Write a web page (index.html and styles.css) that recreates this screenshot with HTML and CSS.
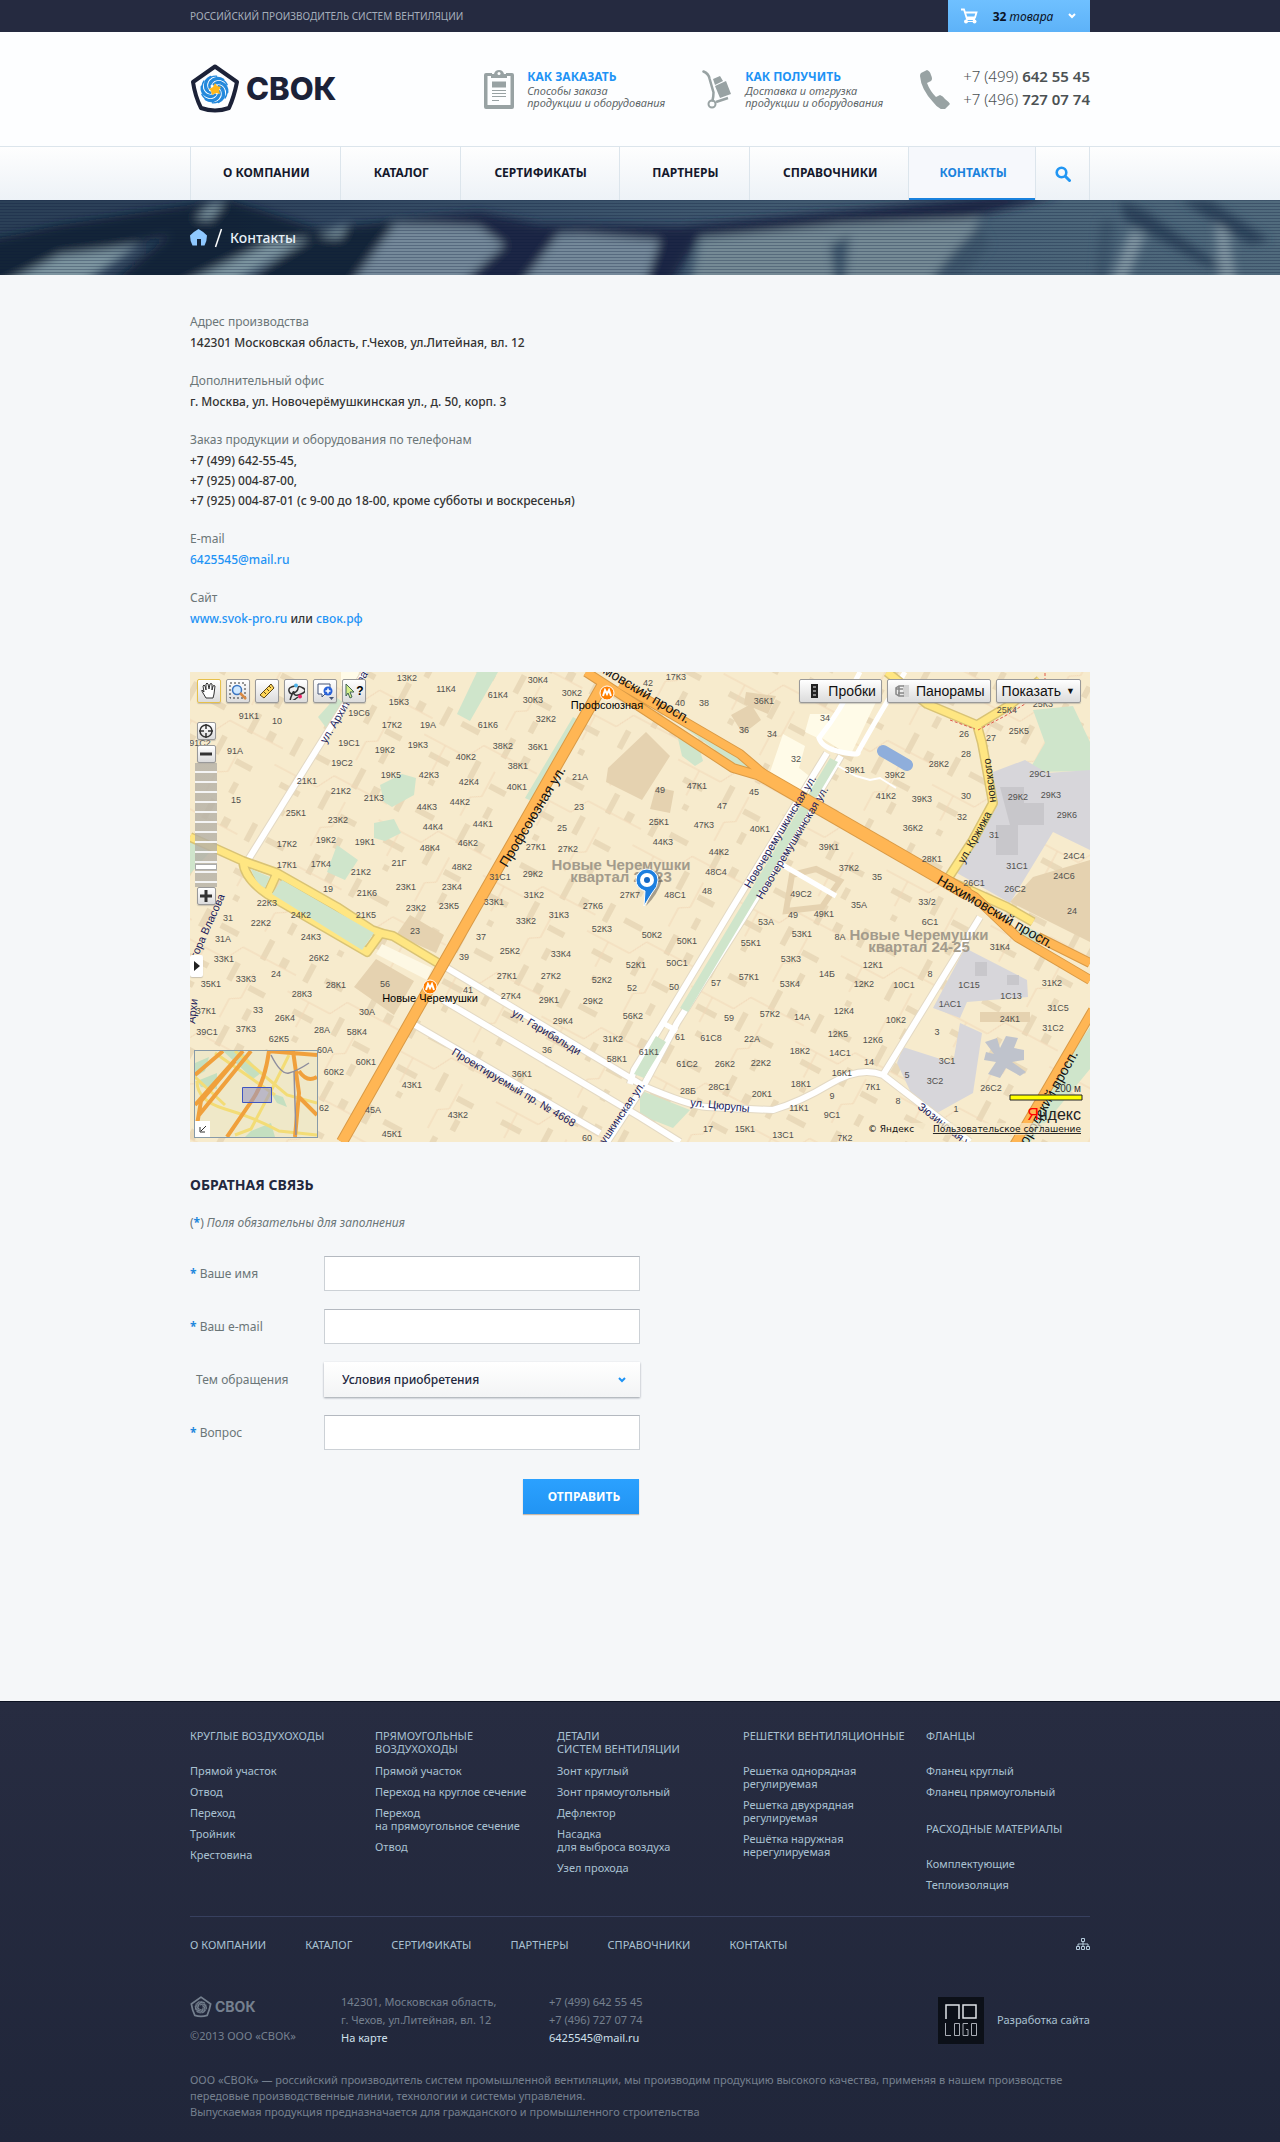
FILE: index.html
```html
<!DOCTYPE html>
<html lang="ru">
<head>
<meta charset="utf-8">
<meta name="viewport" content="width=device-width, initial-scale=1">
<title>СВОК — Контакты</title>
<link rel="stylesheet" href="styles.css">
</head>
<body>
<svg class="defs" aria-hidden="true">
  <defs>
    <symbol id="emblem" viewBox="0 0 50 50">
      <path d="M25 2.500 47 18 Q44 33 39 44 Q25 49 11 44 Q5 32 3 18Z" fill="none" stroke="currentColor" stroke-width="4" stroke-linejoin="round"/>
    </symbol>
    <symbol id="swirl" viewBox="-16 -16 32 32">
      <g fill="none" stroke="currentColor" stroke-linecap="round">
        <path id="arm" d="M-5-2C-7-9 2-15 9-10" stroke-width="2.500"/>
        <path id="arm2" d="M-4-5C-1-12 9-13 13-5" stroke-width="1.500"/>
        <use href="#arm" transform="rotate(60)"/><use href="#arm2" transform="rotate(60)"/>
        <use href="#arm" transform="rotate(120)"/><use href="#arm2" transform="rotate(120)"/>
        <use href="#arm" transform="rotate(180)"/><use href="#arm2" transform="rotate(180)"/>
        <use href="#arm" transform="rotate(240)"/><use href="#arm2" transform="rotate(240)"/>
        <use href="#arm" transform="rotate(300)"/><use href="#arm2" transform="rotate(300)"/>
      </g>
    </symbol>
  </defs>
</svg>

<div class="topbar">
  <div class="wrap topbar-row">
    <span class="slogan">РОССИЙСКИЙ ПРОИЗВОДИТЕЛЬ СИСТЕМ ВЕНТИЛЯЦИИ</span>
    <button class="cart" type="button">
      <svg width="17" height="16" viewBox="0 0 17 16" aria-hidden="true"><path d="M0 1.500h3l3 9.500h8M4 4.500h11.500L14 9.500H5.500" fill="none" stroke="#fff" stroke-width="1.800"/><path d="M4 13.500h11" stroke="#fff"/><circle cx="5" cy="13.500" r="2" fill="#fff"/><circle cx="13.500" cy="13.500" r="2" fill="#fff"/></svg>
      <span class="cart-text"><b>32</b> <i>товара</i></span>
      <svg width="8" height="6" viewBox="0 0 8 6" aria-hidden="true"><path d="M1 1l3 3 3-3" fill="none" stroke="#fff" stroke-width="2"/></svg>
    </button>
  </div>
</div>

<header class="header">
  <div class="wrap header-row">
    <a class="logo" href="#">
      <svg width="50" height="50" viewBox="0 0 50 50" aria-hidden="true"><use href="#emblem"/><use href="#swirl" class="swirl" x="9" y="10" width="31" height="31"/><path d="M25 19l2 3 4 1-2 3 1 4-4-1-4 2-1-4-2-2 4-2z" fill="#ffb81c"/></svg>
      <span class="logo-text">СВОК</span>
    </a>
    <div class="info">
      <svg width="30" height="39" viewBox="0 0 30 39" aria-hidden="true"><path d="M2 3h6v3H3.500v29h23V6H22V3h6q2 0 2 2v32q0 2-2 2H2q-2 0-2-2V5q0-2 2-2z" fill="#98a2a3"/><path d="M7 8V4h3q1-4 5-4t5 4h3v4z" fill="#98a2a3"/><circle cx="15" cy="3.500" r="1.500" fill="#fff"/><path d="M8 11.500h14v6H8z" fill="#98a2a3"/><path d="M8 20.500h14M8 23.500h14M8 26.500h14M8 30.500h7" stroke="#98a2a3"/></svg>
      <div class="info-text"><a href="#">КАК ЗАКАЗАТЬ</a><span>Способы заказа<br>продукции и оборудования</span></div>
    </div>
    <div class="info">
      <svg width="30" height="39" viewBox="0 0 30 39" aria-hidden="true"><path d="M1.500 1.500q5 2 6 7l4 14q0 4-1 8" fill="none" stroke="#98a2a3" stroke-width="2.500" stroke-linecap="round"/><path d="M11 9l7-3 3 5-8 4zM13 16l11-5 5 13-11 4z" fill="#98a2a3"/><path d="M14 32l12-4" stroke="#98a2a3" stroke-width="2.500"/><circle cx="10" cy="34" r="3.500" fill="none" stroke="#98a2a3" stroke-width="2"/></svg>
      <div class="info-text"><a href="#">КАК ПОЛУЧИТЬ</a><span>Доставка и отгрузка<br>продукции и оборудования</span></div>
    </div>
    <div class="info">
      <svg width="30" height="39" viewBox="0 0 30 39" aria-hidden="true"><path d="M1 3l6-3q3 1 4 5 2 4 0 6l-4 2q3 8 9 14l4-2q3 1 5 4 4 3 5 5l-6 6q-6-1-11-8Q1 19 0 6q0-2 1-3z" fill="#98a2a3"/></svg>
      <div class="phones"><span>+7 (499) <b>642 55 45</b></span><span>+7 (496) <b>727 07 74</b></span></div>
    </div>
  </div>
</header>

<nav class="nav" aria-label="Главное меню">
  <div class="wrap nav-row">
    <a href="#">О КОМПАНИИ</a>
    <a href="#">КАТАЛОГ</a>
    <a href="#">СЕРТИФИКАТЫ</a>
    <a href="#">ПАРТНЕРЫ</a>
    <a href="#">СПРАВОЧНИКИ</a>
    <a class="active" href="#" aria-current="page">КОНТАКТЫ</a>
    <button type="button" aria-label="Поиск"><svg width="16" height="16" viewBox="0 0 16 16" aria-hidden="true"><circle cx="6.500" cy="6.500" r="4.800" fill="none" stroke="#2196f3" stroke-width="2.600"/><path d="M10.500 10.500l4 4" stroke="#2196f3" stroke-width="3" stroke-linecap="round"/></svg></button>
  </div>
</nav>

<div class="banner">
  <svg class="banner-art" viewBox="0 0 1280 75" preserveAspectRatio="xMidYMid slice" aria-hidden="true">
    <defs>
      <filter id="soft" x="-5%" y="-30%" width="110%" height="160%"><feGaussianBlur stdDeviation="5"/></filter>
      <linearGradient id="sky" x2="1"><stop stop-color="#2b4057"/><stop offset=".15" stop-color="#2c4059"/><stop offset=".45" stop-color="#3a526a"/><stop offset=".8" stop-color="#4a6478"/><stop offset="1" stop-color="#516b7d"/></linearGradient>
      <pattern id="scan" width="4" height="3" patternUnits="userSpaceOnUse"><path d="M0 .5h4" stroke="#0a1a38" stroke-opacity=".28"/></pattern>
    </defs>
    <path fill="url(#sky)" d="M0 0h1280v75H0z"/>
    <g filter="url(#soft)">
      <path fill="#101d33" fill-opacity=".85" d="M-10 40L60 25 190 5 230 0 320 30 400 20 500 22 350 90H240L300 40 190 85H110L170 35 60 60-10 90z"/>
      <path fill="#7d95a0" d="M180 85L270 42 310 38 230 85zM0 85l60-30 80-10-60 40zM195 18L212 4 225 2 210 20zM318 36l30-12-8 14z"/>
      <path fill="#74899a" d="M350 85L395 24 480 26 505 45 460 85zM520 85L545 36 680 28 670 85z"/>
      <path fill="#1a2744" d="M395 20L480 12 540 24 680 26 850 10 1000-5 1060-4 960 20 700 36 670 85H645L660 40 560 32 520 85H460L505 45 480 27z"/>
      <path fill="#748a95" d="M700 38L840 24 980 18 960 60 930 85H690z"/>
      <path fill="#40596d" d="M835 85L830 45 850 35 845 85zM955 50L980 25 990 45 960 80 930 80zM1100 20h15L1105 85h-10z"/>
      <path fill="#8094a0" d="M1130 30l15 5-20 50h-15zM1215 15l12 10 10 60h-18z"/>
      <path fill="#2f455c" d="M1120 0l25 10 80 60-20-5-80-45zM1180 0h30l60 40-20 5z"/>
    </g>
    <path fill="url(#scan)" d="M0 0h1280v75H0z"/>
  </svg>
  <div class="wrap crumbs">
    <a href="#" aria-label="Главная"><svg width="17" height="17" viewBox="0 0 17 17" aria-hidden="true"><path d="M8.500 0Q14 3 17 6.500q0 5-2.500 10H11V10H7v6.500H2.500Q0 12 0 6.500 3 3 8.500 0z" fill="#8fc8ff"/></svg></a>
    <svg width="9" height="20" viewBox="0 0 9 20" aria-hidden="true"><path d="M1.500 19L7.500 1" stroke="#fff" stroke-width="1.500"/></svg>
    <h1>Контакты</h1>
  </div>
</div>

<main class="wrap main">
  <dl class="contacts">
    <div><dt>Адрес производства</dt><dd>142301 Московская область, г.Чехов, ул.Литейная, вл. 12</dd></div>
    <div><dt>Дополнительный офис</dt><dd>г. Москва, ул. Новочерёмушкинская ул., д. 50, корп. 3</dd></div>
    <div><dt>Заказ продукции и оборудования по телефонам</dt><dd>+7 (499) 642-55-45,</dd><dd>+7 (925) 004-87-00,</dd><dd>+7 (925) 004-87-01 (с 9-00 до 18-00, кроме субботы и воскресенья)</dd></div>
    <div><dt>E-mail</dt><dd><a href="#">6425545@mail.ru</a></dd></div>
    <div><dt>Сайт</dt><dd><a href="#">www.svok-pro.ru</a> или <a href="#">свок.рф</a></dd></div>
  </dl>

  <section class="map" aria-label="Карта проезда">
    <svg class="map-art" viewBox="0 0 900 470" preserveAspectRatio="xMidYMid slice">
      <defs>
        <pattern id="blocks" width="118" height="97" patternUnits="userSpaceOnUse" patternTransform="rotate(28)">
          <path d="M8 6h6v20H8zM28 12h20v6H28zM78 4h6v22h-6zM98 14h8v10h-8zM14 54h22v6H14zM58 40h6v20h-6zM82 54h18v6H82zM26 78h6v6h-6zM90 76h6v12h-6z" fill="#e9d9b9"/>
          <path d="M0 42h48l10-18h60M70 97V76l10-6V42M24 42v28" fill="none" stroke="#f1d8b8"/>
        </pattern>
      </defs>
      <path fill="#f7ebcd" d="M0 0h900v470H0z"/>
      <path fill="url(#blocks)" d="M0 0h900v470H0z"/>
      <g fill="#cfe5cb">
        <path d="M287 0h21l-28 49-13-7zM383 45l7 4-42 83-13-6zM147 173l21 15-13 20-18-8zM190 113l22-11 14 4-2 17-22 12-8-5zM184 151l20-4 7 14-16 8-11-3z"/>
        <path d="M843 38l40-4 17 36v29l-62 1 17-29zM487 62l22 13 4 14-8 5-13-10zM128 45l18-20 8 6-14 30zM450 418l50 20-17 18-33-13z"/>
        <path d="M480 45l70 37 16 18-22-8zM900 355v42l-60 73h-20zM0 170l20 10-20 22zM837 255l20 10-14 12-26-16z"/>
      </g>
      <path d="M803 100l32-12 22 13 43-3v80l-37-18-43 71-53-30 36-66zM775 276l62 32 1 17-61 5-7 16-27-10zM770 351l22 10-9 60-36 20-24-16-16-34 6-16 50 16z" fill="#d7d6da"/>
      <path d="M810 115h24v16h20v22h-26v30h-22v-30h14zM785 290h12v14h-12zM817 303h12v10h-12z" fill="#c8c7cb"/>
      <path d="M795 370l12-4 3 10 6-12 12 2-4 10 10 2v10l-12 2 14 10-6 4-14-8-6 10-12-4 8-12-12-2 2-8 8 2z" fill="#bfc3cc"/>
      <g fill="#e5d2b0">
        <path d="M843 205l57-17v82l-80-40zM418 96l38-36 24 24-28 44-36-18zM164 315l22-28 38 22-20 34zM220 243l34 20-8 18-40-18zM541 43l20-11 10 16-18 14zM556 20l30 4-8 18-24-10zM466 115l18 4-4 22-20-4z"/>
        <path d="M790 340h50v10H790z"/>
      </g>
      <path d="M186 282l6-10 50 24-5 12z" fill="#fdf8e4"/>
      <path d="M593 62l22 12-6 22 18 14-7 16-40-26zM620 42l20 0-8 26-17-8zM660 10l26 20-26 54-28-18zM151 0h18l-4 14h-14z" fill="#fffbe8"/>
      <path d="M602 203l24-6 24 12-18 26-36 4z" fill="none" stroke="#e5d2b0" stroke-width="6"/>
      <path d="M693 79l24 14" stroke="#8faedb" stroke-width="12" stroke-linecap="round"/>

      <g fill="none" stroke="#e3d9c4" stroke-width="8">
        <path d="M175 0L58 188M637 81L541 238 473 351 444 398 440 412M651 84L565 228 487 351 453 415 417 470M257 296L452 413M253 328L450 445 490 470M225 353L410 461M451 413Q500 434 517 435T583 438Q610 430 640 412T693 403L780 470M693 403L790 245"/>
      </g>
      <g fill="none" stroke="#fff" stroke-width="6">
        <path d="M175 0L58 188M637 81L541 238 473 351 444 398 440 412M651 84L565 228 487 351 453 415 417 470M257 296L452 413M253 328L450 445 490 470M225 353L410 461M451 413Q500 434 517 435T583 438Q610 430 640 412T693 403L780 470M693 403L790 245"/>
        <path d="M670 0Q650 40 629 66 632 76 651 80T668 80Q685 50 697 30L715 0M473 351l14 8M584 188l62 36" stroke-width="5"/>
        <path d="M648 94l18 10 14 4 10-2 16 10" stroke-width="2"/>
      </g>
      <path d="M640 86l8 4L498 340l-8-4zM466 364l10 6-22 36-10-4z" fill="#cfe5cb"/>
      <g fill="none" stroke="#d9c375" stroke-width="10" stroke-linejoin="round">
        <path d="M0 165L53 189 87 201 147 235 182 258Q192 262 203 264L248 291M53 189Q54 206 77 222L177 280 190 262M87 201L78 221M697 0L737 32 787 53 820 33 850 8M787 53L792 71 803 131 783 168 757 208 817 235 843 250"/>
      </g>
      <g fill="none" stroke="#ffe682" stroke-width="7" stroke-linejoin="round">
        <path d="M0 165L53 189 87 201 147 235 182 258Q192 262 203 264L248 291M53 189Q54 206 77 222L177 280 190 262M87 201L78 221M697 0L737 32 787 53 820 33 850 8M787 53L792 71 803 131 783 168 757 208 817 235 843 250"/>
      </g>
      <path d="M61 197l19 8-5 11q-10-5-14-19zM92 208l92 53-12 17-90-56z" fill="#cfe5cb"/>
      <g fill="none" stroke="#d99a46" stroke-width="12" stroke-linejoin="round">
        <path d="M412 14L240 315 152 470"/><path d="M396 0L450 35 543 96 577 106M430 12L550 82 577 105 785 225 827 265 900 308M848 265L900 291M903 338L823 475" stroke-width="10"/><path d="M570 102L778 222" stroke-width="14"/>
      </g>
      <g fill="none" stroke="#ffb654" stroke-width="10" stroke-linejoin="round">
        <path d="M412 14L240 315 152 470"/><path d="M396 0L450 35 543 96 577 106M430 12L550 82 577 105 785 225 827 265 900 308M848 265L900 291M903 338L823 475" stroke-width="8"/><path d="M570 102L778 222" stroke-width="12"/>
      </g>
      <path d="M760 48l25 9M788 58l27-14 20-12 20-20V0" fill="none" stroke="#e0584a" stroke-dasharray="3 2"/>

      <g class="district">
        <text x="431" y="198">Новые Черемушки</text><text x="431" y="210">квартал 22-23</text>
        <text x="729" y="268">Новые Черемушки</text><text x="729" y="280">квартал 24-25</text>
      </g>
      <g class="houses">
        <text x="59" y="47">91К1</text><text x="87" y="52">10</text><text x="10" y="74">91С2</text><text x="45" y="82">91А</text><text x="46" y="131">15</text><text x="117" y="112">21К1</text><text x="106" y="144">25К1</text><text x="97" y="175">17К2</text><text x="97" y="196">17К1</text><text x="77" y="234">22К3</text><text x="131" y="195">17К4</text><text x="138" y="220">19</text><text x="169" y="44">19С6</text><text x="159" y="74">19С1</text><text x="152" y="94">19С2</text><text x="151" y="122">21К2</text><text x="148" y="151">23К2</text><text x="136" y="171">19К2</text><text x="175" y="173">19К1</text><text x="171" y="203">21К2</text><text x="177" y="224">21К6</text><text x="184" y="129">21К3</text><text x="201" y="106">19К5</text><text x="195" y="81">19К2</text><text x="202" y="56">17К2</text><text x="209" y="33">15К3</text><text x="217" y="9">13К2</text><text x="256" y="20">11К4</text><text x="238" y="56">19А</text><text x="228" y="76">19К3</text><text x="239" y="106">42К3</text><text x="237" y="138">44К3</text><text x="243" y="158">44К4</text><text x="240" y="179">48К4</text><text x="209" y="194">21Г</text><text x="216" y="218">23К1</text><text x="262" y="218">23К4</text><text x="272" y="198">48К2</text><text x="278" y="174">46К2</text><text x="293" y="155">44К1</text><text x="270" y="133">44К2</text><text x="279" y="113">42К4</text><text x="276" y="88">40К2</text><text x="313" y="77">38К2</text><text x="298" y="56">61К6</text><text x="308" y="26">61К4</text><text x="348" y="11">30К4</text><text x="343" y="31">30К3</text><text x="382" y="24">30К2</text><text x="356" y="50">32К2</text><text x="348" y="78">36К1</text><text x="328" y="97">38К1</text><text x="327" y="118">40К1</text><text x="390" y="108">21А</text><text x="389" y="138">23</text><text x="372" y="159">25</text><text x="346" y="178">27К1</text><text x="378" y="180">27К2</text><text x="310" y="208">31С1</text><text x="343" y="205">29К2</text><text x="344" y="226">31К2</text><text x="304" y="233">33К1</text><text x="440" y="226">27К7</text><text x="226" y="239">23К2</text><text x="259" y="237">23К5</text><text x="403" y="237">27К6</text>
        <text x="486" y="8">17К3</text><text x="458" y="14">42</text><text x="490" y="34">40</text><text x="514" y="34">38</text><text x="574" y="32">36К1</text><text x="554" y="61">36</text><text x="582" y="65">34</text><text x="635" y="49">34</text><text x="606" y="90">32</text><text x="507" y="117">47К1</text><text x="470" y="121">49</text><text x="564" y="123">45</text><text x="532" y="137">47</text><text x="469" y="153">25К1</text><text x="514" y="156">47К3</text><text x="473" y="173">44К3</text><text x="529" y="183">44К2</text><text x="570" y="160">40К1</text><text x="526" y="203">48С4</text><text x="485" y="226">48С1</text><text x="517" y="222">48</text><text x="665" y="101">39К1</text><text x="705" y="106">39К2</text><text x="696" y="127">41К2</text><text x="732" y="130">39К3</text><text x="723" y="159">36К2</text><text x="639" y="178">39К1</text><text x="659" y="199">37К2</text><text x="687" y="208">35</text><text x="611" y="225">49С2</text><text x="669" y="236">35А</text><text x="737" y="233">33/2</text><text x="742" y="190">28К1</text><text x="772" y="148">32</text><text x="776" y="127">30</text><text x="749" y="95">28К2</text><text x="776" y="85">28</text><text x="774" y="65">26</text><text x="801" y="69">27</text><text x="817" y="41">25К4</text><text x="829" y="62">25К5</text><text x="853" y="35">25К3</text><text x="850" y="105">29С1</text><text x="828" y="128">29К2</text><text x="861" y="126">29К3</text><text x="877" y="146">29К6</text><text x="804" y="166">31</text><text x="827" y="197">31С1</text><text x="884" y="187">24С4</text><text x="874" y="207">24С6</text><text x="784" y="214">26С1</text><text x="825" y="220">26С2</text>
        <text x="38" y="249">31</text><text x="71" y="254">22К2</text><text x="111" y="246">24К2</text><text x="121" y="268">24К3</text><text x="33" y="270">31А</text><text x="34" y="290">33К1</text><text x="129" y="289">26К2</text><text x="176" y="246">21К5</text><text x="225" y="262">23</text><text x="291" y="268">37</text><text x="274" y="288">39</text><text x="86" y="305">24</text><text x="56" y="310">33К3</text><text x="21" y="315">35К1</text><text x="146" y="316">28К1</text><text x="112" y="325">28К3</text><text x="195" y="315">56</text><text x="278" y="321">41</text><text x="68" y="341">33</text><text x="16" y="342">37К1</text><text x="95" y="349">26К4</text><text x="177" y="343">30А</text><text x="56" y="360">37К3</text><text x="17" y="363">39С1</text><text x="132" y="361">28А</text><text x="89" y="370">62К5</text><text x="167" y="363">58К4</text><text x="135" y="381">60А</text><text x="176" y="393">60К1</text><text x="144" y="403">60К2</text><text x="134" y="439">62</text><text x="183" y="441">45А</text><text x="202" y="465">45К1</text><text x="222" y="416">43К1</text><text x="268" y="446">43К2</text><text x="336" y="252">33К2</text><text x="369" y="246">31К3</text><text x="412" y="260">52К3</text><text x="320" y="282">25К2</text><text x="371" y="285">33К4</text><text x="446" y="296">52К1</text><text x="317" y="307">27К1</text><text x="361" y="307">27К2</text><text x="412" y="311">52К2</text><text x="442" y="319">52</text><text x="321" y="327">27К4</text><text x="359" y="331">29К1</text><text x="403" y="332">29К2</text><text x="443" y="347">56К2</text><text x="373" y="352">29К4</text><text x="423" y="370">31К2</text><text x="357" y="381">36</text><text x="427" y="390">58К1</text><text x="332" y="405">36К1</text><text x="397" y="469">60</text>
        <text x="462" y="266">50К2</text><text x="497" y="272">50К1</text><text x="487" y="294">50С1</text><text x="484" y="318">50</text><text x="576" y="253">53А</text><text x="603" y="246">49</text><text x="634" y="245">49К1</text><text x="612" y="265">53К1</text><text x="561" y="274">55К1</text><text x="650" y="268">8А</text><text x="740" y="253">6С1</text><text x="601" y="290">53К3</text><text x="559" y="308">57К1</text><text x="526" y="314">57</text><text x="600" y="315">53К4</text><text x="637" y="305">14Б</text><text x="683" y="296">12К1</text><text x="674" y="315">12К2</text><text x="740" y="305">8</text><text x="714" y="316">10С1</text><text x="580" y="345">57К2</text><text x="539" y="349">59</text><text x="612" y="348">14А</text><text x="654" y="342">12К4</text><text x="706" y="351">10К2</text><text x="648" y="365">12К5</text><text x="683" y="371">12К6</text><text x="490" y="368">61</text><text x="521" y="369">61С8</text><text x="562" y="370">22А</text><text x="459" y="383">61К1</text><text x="610" y="382">18К2</text><text x="650" y="384">14С1</text><text x="497" y="395">61С2</text><text x="535" y="395">26К2</text><text x="571" y="394">22К2</text><text x="679" y="393">14</text><text x="652" y="404">16К1</text><text x="611" y="415">18К1</text><text x="498" y="422">28Б</text><text x="529" y="418">28С1</text><text x="572" y="425">20К1</text><text x="683" y="418">7К1</text><text x="642" y="427">9</text><text x="609" y="439">11К1</text><text x="642" y="446">9С1</text><text x="708" y="432">8</text><text x="518" y="460">17</text><text x="555" y="460">15К1</text><text x="593" y="466">13С1</text><text x="655" y="469">7К2</text><text x="717" y="406">5</text><text x="745" y="412">3С2</text><text x="757" y="392">3С1</text><text x="747" y="363">3</text><text x="766" y="440">1</text><text x="779" y="316">1С15</text><text x="760" y="335">1АС1</text><text x="821" y="327">1С13</text><text x="820" y="350">24К1</text><text x="810" y="278">31К4</text><text x="862" y="314">31К2</text><text x="868" y="339">31С5</text><text x="863" y="359">31С2</text><text x="882" y="242">24</text><text x="801" y="419">26С2</text>
      </g>
      <g class="streets">
        <text transform="translate(136 72) rotate(-59)">ул. Архитектора</text>
        <text transform="translate(560 217) rotate(-59)">Новочеремушкинская ул.</text>
        <text transform="translate(572 228) rotate(-59)">Новочеремушкинская ул.</text>
        <text transform="translate(321 343) rotate(31)">ул. Гарибальди</text>
        <text transform="translate(261 382) rotate(31)">Проектируемый пр. № 4668</text>
        <text transform="translate(500 434) rotate(6)">ул. Цюрупы</text>
        <text transform="translate(727 436) rotate(38)">Зюзинская ул.</text>
        <text transform="translate(-10 325) rotate(-66)">Архитектора Власова</text>
        <text transform="translate(5 352) rotate(-84)">Архи</text>
        <text transform="translate(383 520) rotate(-56)">Новочеремушкинская ул.</text>
      </g>
      <g class="avenues">
        <text transform="translate(317 196) rotate(-59)">Профсоюзная ул.</text>
        <text transform="translate(384 -16) rotate(31)">Нахимовский просп.</text>
        <text transform="translate(746 211) rotate(30)">Нахимовский просп.</text>
        <text transform="translate(835 478) rotate(-61)">городский просп.</text>
      </g>
      <g class="streets dark">
        <text transform="translate(774 192) rotate(-61)">ул. Кржижа</text>
        <text transform="translate(806 130) rotate(-97)">новского</text>
      </g>
      <g class="metro">
        <circle cx="417" cy="21" r="7"/><path d="M413 24l2-6 2 4 2-4 2 6"/><text x="417" y="37">Профсоюзная</text>
        <circle cx="240" cy="315" r="7"/><path d="M236 318l2-6 2 4 2-4 2 6"/><text x="240" y="330">Новые Черемушки</text>
      </g>
      <path d="M456 234q12-12 16-26l-4-6z" fill="#55504a" opacity=".5"/>
      <path d="M457 197a11 11 0 0 1 11 11q0 7-6 13l-8 13 1-15q-9-3-9-11a11 11 0 0 1 11-11z" fill="#1d7fe0" stroke="#fff"/>
      <circle cx="457" cy="208" r="7" fill="#fff"/><circle cx="457" cy="208" r="3" fill="#1668c4"/>
      <g class="legal">
        <path d="M676 451h216v12H676z" fill="#f7ebcd" opacity=".7"/>
        <path d="M820 423h72v5h-72z" fill="#ff0" stroke="#222"/>
        <text class="scale" x="891" y="420">200 м</text>
        <text class="brand" x="891" y="448"><tspan fill="#f00">Я</tspan>ндекс</text>
        <text x="678" y="460" class="copy">© Яндекс</text>
        <text x="891" y="460" class="copy under">Пользовательское соглашение</text>
      </g>
    </svg>

    <div class="map-tools">
      <button class="on" type="button" aria-label="Рука"><svg width="18" height="18" viewBox="0 0 18 18"><path d="M6 16L3 11Q1 8 2 8l2 2-1-6q1-2 2 0l1 4V2q1-2 2 0l1 5 1-5q1-1 2 0v6l1-4q1-1 2 0l-1 8-1 4z" fill="#fff" stroke="#333"/></svg></button>
      <button type="button" aria-label="Лупа"><svg width="18" height="18" viewBox="0 0 18 18"><path d="M1 1h15v15H1z" fill="none" stroke="#333" stroke-dasharray="2 2"/><circle cx="8" cy="8" r="4.500" fill="#cfe8ff" stroke="#3b76c2" stroke-width="1.500"/><path d="M11 11l6 6" stroke="#d88a45" stroke-width="2.500"/></svg></button>
      <button type="button" aria-label="Линейка"><svg width="18" height="18" viewBox="0 0 18 18"><path d="M2 13L13 2l3 4L6 16z" fill="#ffd75a" stroke="#5b4617"/><path d="M6 10l2 2M9 7l2 2M11 4l2 2" stroke="#5b4617"/></svg></button>
      <button type="button" aria-label="Маршрут"><svg width="18" height="18" viewBox="0 0 18 18"><path d="M8 4Q1 5 2 9t5 2 4-5 5 0-2 6-7-1-3 4 7 0" fill="none" stroke="#333" stroke-width="1.500"/><circle cx="9" cy="3.500" r="2" fill="#4fb3e8"/><circle cx="13" cy="14.500" r="2" fill="#e26"/></svg></button>
      <button type="button" aria-label="Метка"><svg width="18" height="18" viewBox="0 0 18 18"><path d="M2 2h12v10H9l-3 3v-3H2z" fill="#fff" stroke="#457"/><circle cx="12" cy="9" r="4.500" fill="#2862d8"/><path d="M12 6.500v5M9.500 9h5" stroke="#fff" stroke-width="1.500"/><path d="M13 15h5l-2.500 3z" fill="#457"/></svg></button>
      <button type="button" aria-label="Справка"><svg width="12" height="18" viewBox="0 0 12 18"><path d="M2 2l8 8H6l2 5-2 1-2-5-2 3z" fill="#d4f08a" stroke="#465"/></svg><span class="q">?</span></button>
    </div>
    <div class="map-layers">
      <button type="button"><svg width="18" height="16" viewBox="0 0 18 16"><path d="M6 1h7v14H6z" fill="#222"/><path d="M8 4h3M8 8h3M8 12h3" stroke="#888" stroke-width="2"/></svg>Пробки</button>
      <button type="button"><svg width="18" height="16" viewBox="0 0 18 16"><path d="M10 2h6v12h-6z" fill="#d2d2d2"/><path d="M11 3H6L3 5v6l3 2h5M3 6h7M5 10h6M6 3v10" fill="none" stroke="#888" stroke-width="1.500"/></svg>Панорамы</button>
      <button type="button">Показать <span class="tri">▼</span></button>
    </div>
    <div class="zoom">
      <button type="button" aria-label="Центр"><svg width="16" height="16" viewBox="0 0 16 16"><circle cx="8" cy="8" r="6" fill="none" stroke="#333" stroke-width="1.500"/><path d="M8 1v5M8 10v5M1 8h5M10 8h5" stroke="#333" stroke-width="1.500"/></svg></button>
      <button class="minus" type="button" aria-label="Отдалить"><svg width="14" height="14" viewBox="0 0 14 14"><path d="M1 7h12" stroke="#333" stroke-width="3"/></svg></button>
      <div class="track"><span class="knob"></span></div>
      <button type="button" aria-label="Приблизить"><svg width="14" height="14" viewBox="0 0 14 14"><path d="M1 7h12M7 1v12" stroke="#333" stroke-width="3"/></svg></button>
    </div>
    <button class="side-tab" type="button" aria-label="Панель"><svg width="6" height="10" viewBox="0 0 6 10"><path d="M0 0l6 5-6 5z" fill="#222"/></svg></button>
    <svg class="minimap" viewBox="0 0 122 86" aria-hidden="true">
      <path fill="#efe8c8" d="M0 0h122v86H0z"/>
      <path fill="#c4dfc0" d="M28 0h18l20 22-8 6zM2 30l20-8v16L6 36zM56 80l20-8 4 14H50zM76 42l12 4 4 10-10-4zM0 12l14-6-4 14-10 6z"/>
      <g fill="none" stroke="#f3dc76" stroke-width="3"><path d="M2 30Q2 50 30 58T84 80l38 4M40 0L92 44l30 8M20 2l60 42M94 4L76 40 56 78 40 84M0 26l30 28"/></g>
      <g fill="none" stroke="#f0a03c" stroke-width="4"><path d="M0 24L28 0M4 64L56 0M0 54L48 0M74 0Q70 30 58 48L32 86M0 86L6 50 40 10M98 0l6 42-4 44M72 0l50 4M104 20q8 12 18 6M104 46l18 18"/></g>
      <path d="M76 4q10 20 18 18t20-10M99 20l2 64" fill="none" stroke="#8e8e9e" stroke-width="1.500"/>
      <path d="M47.500 36.500h29v15h-29z" fill="#9999c4" fill-opacity=".6" stroke="#3f55c0"/>
      <path d="M0 70h15v16H0z" fill="#fff"/><path d="M11 75l-5 5M5 76v5h5" fill="none" stroke="#333"/>
    </svg>
  </section>

  <form class="feedback">
    <h2>ОБРАТНАЯ СВЯЗЬ</h2>
    <p class="note">(<span class="star">*</span>) <i>Поля обязательны для заполнения</i></p>
    <div class="row"><label for="name"><span class="star">*</span> Ваше имя</label><input id="name" type="text"></div>
    <div class="row"><label for="email"><span class="star">*</span> Ваш e-mail</label><input id="email" type="email"></div>
    <div class="row"><label class="plain" for="topic">Тем обращения</label><select id="topic"><option>Условия приобретения</option></select></div>
    <div class="row"><label for="question"><span class="star">*</span> Вопрос</label><input id="question" type="text"></div>
    <button class="send" type="submit">ОТПРАВИТЬ</button>
  </form>
</main>

<footer class="footer">
  <div class="wrap">
    <div class="cats">
      <section><h3>КРУГЛЫЕ ВОЗДУХОХОДЫ</h3><ul><li><a href="#">Прямой участок</a></li><li><a href="#">Отвод</a></li><li><a href="#">Переход</a></li><li><a href="#">Тройник</a></li><li><a href="#">Крестовина</a></li></ul></section>
      <section><h3>ПРЯМОУГОЛЬНЫЕ<br>ВОЗДУХОХОДЫ</h3><ul><li><a href="#">Прямой участок</a></li><li><a href="#">Переход на круглое сечение</a></li><li><a href="#">Переход<br>на прямоугольное сечение</a></li><li><a href="#">Отвод</a></li></ul></section>
      <section><h3>ДЕТАЛИ<br>СИСТЕМ ВЕНТИЛЯЦИИ</h3><ul><li><a href="#">Зонт круглый</a></li><li><a href="#">Зонт прямоугольный</a></li><li><a href="#">Дефлектор</a></li><li><a href="#">Насадка<br>для выброса воздуха</a></li><li><a href="#">Узел прохода</a></li></ul></section>
      <section><h3>РЕШЕТКИ ВЕНТИЛЯЦИОННЫЕ</h3><ul><li><a href="#">Решетка однорядная<br>регулируемая</a></li><li><a href="#">Решетка двухрядная<br>регулируемая</a></li><li><a href="#">Решётка наружная<br>нерегулируемая</a></li></ul></section>
      <section><h3>ФЛАНЦЫ</h3><ul><li><a href="#">Фланец круглый</a></li><li><a href="#">Фланец прямоугольный</a></li></ul><h3 class="second">РАСХОДНЫЕ МАТЕРИАЛЫ</h3><ul><li><a href="#">Комплектующие</a></li><li><a href="#">Теплоизоляция</a></li></ul></section>
    </div>
    <nav class="foot-nav" aria-label="Нижнее меню">
      <a href="#">О КОМПАНИИ</a><a href="#">КАТАЛОГ</a><a href="#">СЕРТИФИКАТЫ</a><a href="#">ПАРТНЕРЫ</a><a href="#">СПРАВОЧНИКИ</a><a href="#">КОНТАКТЫ</a>
      <a class="sitemap" href="#" aria-label="Карта сайта"><svg width="14" height="13" viewBox="0 0 14 13"><path d="M5.500.5h3v3h-3zM.5 8.500h3v3h-3zM5.500 8.500h3v3h-3zM10.500 8.500h3v3h-3zM7 4v4M2 8V6h10v2" fill="none" stroke="#b4cbdc"/></svg></a>
    </nav>
    <div class="bottom">
      <div class="brand-col">
        <a class="logo-small" href="#"><svg width="22" height="22" viewBox="0 0 50 50" aria-hidden="true"><use href="#emblem"/><use href="#swirl" x="9" y="10" width="31" height="31"/></svg><span>СВОК</span></a>
        <p>©2013 ООО «СВОК»</p>
      </div>
      <address>142301, Московская область,<br>г. Чехов, ул.Литейная, вл. 12<br><a href="#">На карте</a></address>
      <p class="tel">+7 (499) 642 55 45<br>+7 (496) 727 07 74<br><a href="#">6425545@mail.ru</a></p>
      <a class="dev" href="#"><svg width="46" height="47" viewBox="0 0 46 47" aria-hidden="true"><path d="M0 0h46v47H0z" fill="#0c1018"/><path d="M8 22V8h13v14M25 8h13v13H25z" fill="none" stroke="#dfe3e8" stroke-width="1.500"/><path d="M7.500 26v12.500H13M16.500 26.500h5v12h-5zM30 26.500h-5v12h5v-6h-2M33.500 26.500h5v12h-5z" fill="none" stroke="#a9adb5"/></svg>Разработка сайта</a>
    </div>
    <p class="about">ООО «СВОК» — российский производитель систем промышленной вентиляции, мы производим продукцию высокого качества, применяя в нашем производстве<br>передовые производственные линии, технологии и системы управления.<br>Выпускаемая продукция предназначается для гражданского и промышленного строительства</p>
  </div>
</footer>
</body>
</html>
```
FILE: styles.css
```css
* { box-sizing: border-box; }
body {
  margin: 0;
  background: #f5f7f9;
  color: #333;
  font-family: "Noto Sans", "Open Sans", sans-serif;
  font-size: 12px;
}
h1, h2, h3, p, dl, dd, ul { margin: 0; padding: 0; }
ul { list-style: none; }
a { color: #1e93f5; text-decoration: none; }
button { font-family: inherit; cursor: pointer; }
svg { display: block; flex: none; }
.defs { position: absolute; width: 0; height: 0; }
.wrap { width: 100%; max-width: 900px; margin: 0 auto; }

.topbar { background: #252a40; }
.topbar-row { display: flex; justify-content: space-between; align-items: center; height: 32px; }
.slogan { color: #a5aebb; font-size: 10px; }
.cart {
  display: flex; align-items: center; justify-content: space-between;
  width: 142px; height: 32px; padding: 0 14px 0 13px;
  border: 0; background: linear-gradient(#6fc0ff, #5db2f8); color: #0b1224; font-size: 12px;
}

.header { background: #fdfeff; }
.header-row { display: flex; align-items: center; gap: 34px; height: 114px; }
.logo { display: flex; align-items: center; gap: 6px; margin-right: auto; color: #1c2238; }
.logo-text { font: 800 31px/38px Inter, "Liberation Sans", sans-serif; }
.swirl { color: #2389dc; }
.info { display: flex; align-items: center; gap: 13px; }
.info-text { width: 141px; padding-bottom: 1px; white-space: nowrap; }
.info-text a { display: block; font-size: 12px; line-height: 17px; font-weight: 700; }
.info-text span { display: block; font-size: 11px; line-height: 12px; font-style: italic; color: #5d6668; }
.phones { display: grid; padding-bottom: 2px; font-size: 15px; line-height: 23px; font-weight: 300; color: #4b5153; white-space: nowrap; }
.phones b { font-weight: 600; }

.nav { border-top: 1px solid #dce5ec; background: linear-gradient(#fefefe, #edf2f7); }
.nav-row {
  display: grid; grid-template-columns: 150fr 120fr 159fr 131fr 159fr 127fr 54fr;
  height: 53px; border-left: 1px solid #dce5ec;
}
.nav a, .nav button {
  display: flex; align-items: center; justify-content: center;
  border: 0; border-right: 1px solid #dce5ec; background: none;
  color: #14182c; font-size: 12px; font-weight: 700;
}
.nav a { padding: 0 0 3px 2px; }
.nav .active { background: #f6f8fc; color: #1a82dd; box-shadow: inset 0 -2px #1a82dd; }

.banner { position: relative; height: 75px; background: #253650; }
.banner-art { position: absolute; inset: 0; width: 100%; height: 100%; }
.crumbs { position: relative; display: flex; align-items: center; gap: 7px; height: 75px; }
.crumbs h1 { color: #e6f0f8; font-size: 14px; font-weight: 500; }

.main { padding: 36px 0 187px; }
.contacts { display: grid; gap: 17px; font-size: 12px; }
.contacts dt { line-height: 22px; color: #6b7678; }
.contacts dd { line-height: 20px; font-weight: 500; }

.map { position: relative; height: 470px; margin-top: 43px; overflow: hidden; }
.map-art { width: 100%; height: 100%; font-family: "Liberation Sans", Arial, sans-serif; }
.houses text { font-size: 9px; text-anchor: middle; fill: #50504e; }
.district text { font-size: 15px; font-weight: 700; text-anchor: middle; fill: #a39b8c; }
.streets text { font-size: 11px; fill: #1c1c5c; }
.dark text { fill: #222; }
.avenues text { font-size: 14px; fill: #111; }
.metro circle { fill: #ff7f00; stroke: #fff; }
.metro path { fill: none; stroke: #fff; stroke-width: 2; }
.metro text { font-size: 11px; text-anchor: middle; fill: #000; }
.legal .scale { font-size: 10px; text-anchor: end; fill: #333; }
.legal .brand { font-size: 16px; text-anchor: end; fill: #222; }
.legal .copy { font-family: "DejaVu Sans", sans-serif; font-size: 9px; fill: #111; }
.legal .under { text-anchor: end; text-decoration: underline; }

.map button {
  display: flex; align-items: center; justify-content: center; padding: 0;
  border: 1px solid #999; border-radius: 2px; background: linear-gradient(#fff, #dcdcdc);
  box-shadow: 0 1px 1px #8886;
}
.map-tools { position: absolute; left: 7px; top: 7px; display: flex; gap: 5px; }
.map-tools button { width: 24px; height: 24px; }
.map-tools .on { border-color: #e6c04a; }
.map-tools .q { font: 700 12px/16px "Liberation Sans", sans-serif; }
.map-layers { position: absolute; right: 9px; top: 7px; display: flex; gap: 5px; }
.map .map-layers button { gap: 5px; height: 24px; padding: 0 5px; font: 14px/20px "Liberation Sans", Arial, sans-serif; color: #111; }
.tri { font-size: 9px; }
.zoom { position: absolute; left: 5px; top: 50px; display: grid; justify-items: center; width: 22px; }
.zoom button { width: 19px; height: 18px; }
.zoom .minus { margin-top: 5px; }
.track { position: relative; width: 22px; height: 124px; background: repeating-linear-gradient(#b4b0a6cc 0 8px, #f4f4f4 8px 10px); }
.knob { position: absolute; left: 0; top: 101px; width: 22px; height: 6px; border: 1px solid #aaa; background: #fff; }
.map .side-tab { position: absolute; left: 0; top: 283px; width: 13px; height: 22px; border: 0; background: #fff; }
.minimap { position: absolute; left: 5px; top: 379px; width: 122px; height: 86px; outline: 1px solid #879aa8; }

.feedback { display: grid; gap: 18px; max-width: 450px; margin-top: 31px; }
.feedback h2 { color: #23283e; font-size: 14px; line-height: 24px; }
.note { margin: -2px 0 5px; color: #6b7678; font-size: 12px; line-height: 20px; }
.star { color: #1e88dd; font-weight: 700; }
.row { display: grid; grid-template-columns: 134px 1fr; align-items: center; }
.row label { color: #6b7678; font-size: 12px; }
.row .plain { padding-left: 6px; }
.row input, .row select {
  width: 100%; height: 35px; padding: 0 18px; border: 1px solid #ccd1d6; border-top-color: #b4b9c0;
  background: #fff; color: #23283e; font: 500 12px "Noto Sans", sans-serif;
}
.row select {
  appearance: none; border: 0; box-shadow: 0 1px 2px #9aa0a8;
  background: url("data:image/svg+xml,%3Csvg xmlns='http://www.w3.org/2000/svg' width='8' height='6'%3E%3Cpath d='M1 1l3 3 3-3' fill='none' stroke='%231e93f5' stroke-width='2'/%3E%3C/svg%3E") right 14px center no-repeat, linear-gradient(#fff, #f3f4f5);
}
.send {
  justify-self: end; width: 116px; height: 35px; margin: 11px 1px 0 0; padding: 0 0 0 6px; border: 0;
  background: linear-gradient(#2ba1ff, #2194f3); box-shadow: 0 1px 1px #c8b8a8; color: #fff; font-size: 12px; font-weight: 700;
}

.footer { padding: 27px 0 21px; border-top: 1px solid #0c1222; background: linear-gradient(#272c41, #20263a); color: #75808f; font-size: 11px; }
.footer a { color: #a9c1d2; }
.cats { display: grid; grid-template-columns: 185fr 182fr 186fr 183fr 164fr; padding-bottom: 25px; border-bottom: 1px solid #37405f; }
.cats h3 { min-height: 26px; margin-bottom: 9px; color: #a9c1d2; font-size: 11px; line-height: 13px; font-weight: 400; white-space: nowrap; }
.cats .second { margin-top: 24px; }
.cats ul { display: grid; gap: 8px; }
.cats li { line-height: 13px; white-space: nowrap; }
.foot-nav { display: flex; align-items: center; gap: 39px; height: 54px; }
.sitemap { margin-left: auto; }
.bottom { display: flex; padding-top: 22px; line-height: 18px; }
.brand-col { width: 151px; padding-top: 3px; }
.logo-small { display: flex; align-items: center; gap: 3px; height: 22px; }
.footer .logo-small { color: #75808f; }
.logo-small span { font: 700 14px/22px Inter, sans-serif; }
.brand-col p { margin-top: 9px; }
.bottom address { width: 208px; font-style: normal; }
.footer .bottom address a, .footer .tel a { color: #cfe0ec; }
.dev { display: flex; align-items: center; gap: 13px; margin-left: auto; }
.about { margin-top: 25px; padding-bottom: 2px; line-height: 16px; white-space: nowrap; }
```
